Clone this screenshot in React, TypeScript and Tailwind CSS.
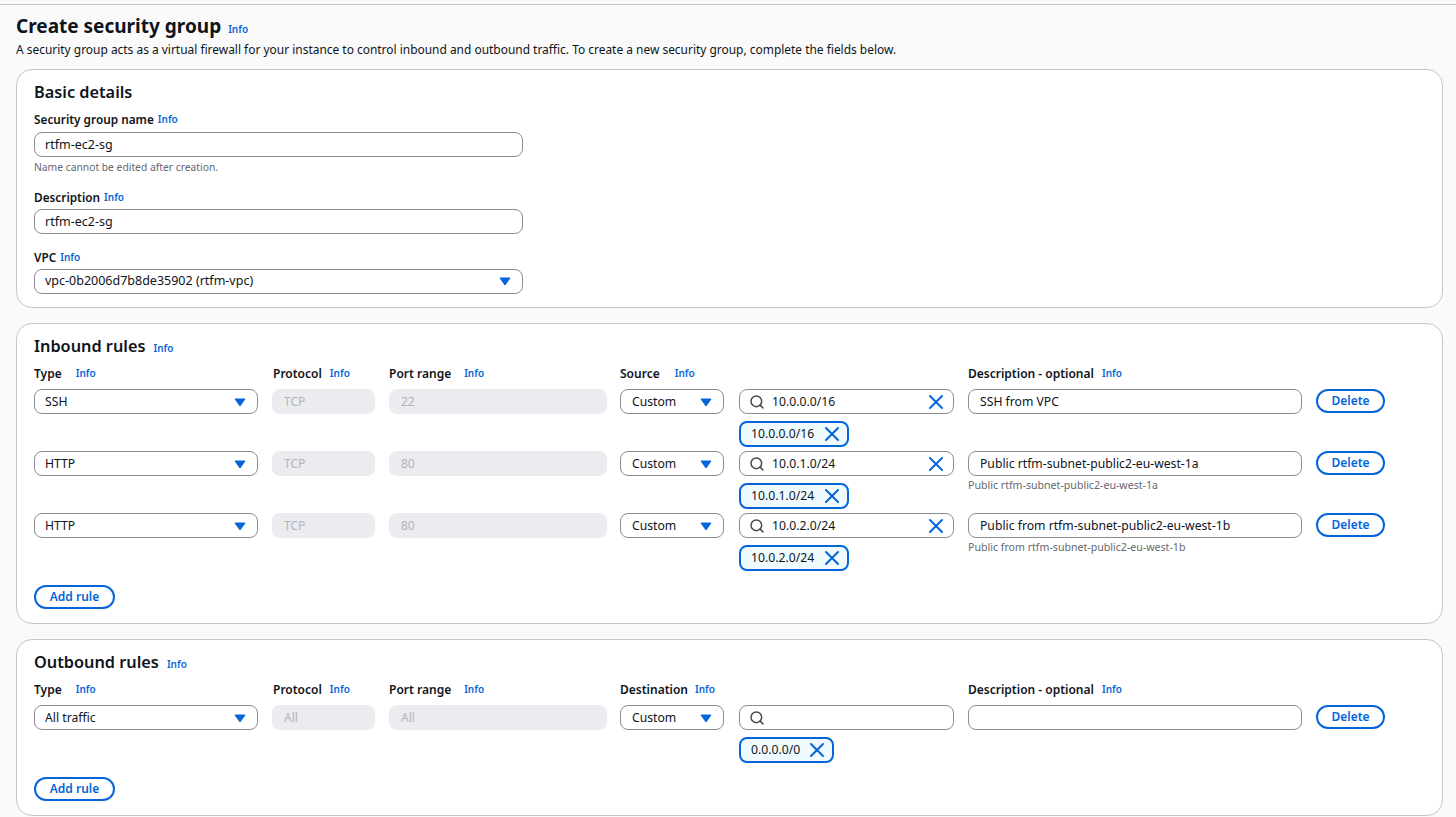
import { Search, X } from "lucide-react";

const blue = "text-[#0565d8]";

function Info({ className = "" }: { className?: string }) {
    return <span className={`text-[10px] font-semibold ${blue} ${className}`}>Info</span>;
}

function Caret() {
    return (
        <svg width="12" height="9" viewBox="0 0 12 9" className="shrink-0">
            <path d="M1 1h10L6 8z" fill="#0565d8" stroke="#0565d8" strokeLinejoin="round" />
        </svg>
    );
}

function Field({ value, className = "" }: { value: string; className?: string }) {
    return (
        <div className={`flex h-[25px] items-center rounded-lg border border-[#8c8c94] bg-white pt-[1px] text-[#0f141a] ${className}`}>
            {value}
        </div>
    );
}

function SelectBox({ value, className = "" }: { value: string; className?: string }) {
    return (
        <div className={`flex h-[25px] items-center justify-between rounded-lg border border-[#8c8c94] bg-white pr-[11px] text-[#0f141a] ${className}`}>
            <span>{value}</span>
            <Caret />
        </div>
    );
}

function Disabled({ value, className = "" }: { value: string; className?: string }) {
    return (
        <div className={`flex h-[25px] items-center rounded-lg bg-[#ebebf0] px-[12px] pt-[1px] text-[12px] text-[#b4b4bb] ${className}`}>
            {value}
        </div>
    );
}

function PillButton({ label, className = "" }: { label: string; className?: string }) {
    return (
        <div className={`flex h-[24px] items-center justify-center rounded-full border-2 border-[#0565d8] bg-white text-[12px] font-semibold ${blue} ${className}`}>
            {label}
        </div>
    );
}

function Chip({ value, className = "" }: { value: string; className?: string }) {
    return (
        <div className={`flex h-[26px] items-center justify-between rounded-lg border-2 border-[#0565d8] bg-[#f0fbff] pl-[10px] pr-[3px] text-[12.2px] text-[#0f141a] ${className}`}>
            <span>{value}</span>
            <X size={24} strokeWidth={2} className={blue} />
        </div>
    );
}

function HeaderRow({ source }: { source: string }) {
    const isDest = source === "Destination";
    return (
        <div className="mb-[6px] flex h-[19px] items-center text-[12px] font-semibold text-[#0f141a]">
            <div className="flex w-[239px] items-center"><span>Type</span><Info className="ml-[14px]" /></div>
            <div className="flex w-[116px] items-center"><span>Protocol</span><Info className="ml-[8px]" /></div>
            <div className="flex w-[231px] items-center"><span>Port range</span><Info className="ml-[13px]" /></div>
            <div className="flex w-[348px] items-center"><span>{source}</span><Info className={isDest ? "ml-[7px]" : "ml-[15px]"} /></div>
            <div className="flex items-center"><span>Description - optional</span><Info className="ml-[8px]" /></div>
        </div>
    );
}

interface Rule {
    type: string;
    protocol: string;
    port: string;
    query: string;
    chip: string;
    description: string;
    hint?: string;
}

function RuleRow({ rule }: { rule: Rule }) {
    return (
        <div className="flex h-[62px] items-start text-[12.2px]">
            <SelectBox value={rule.type} className="w-[224px] pl-[10px] pt-[1px]" />
            <Disabled value={rule.protocol} className="ml-[14px] w-[103px]" />
            <Disabled value={rule.port} className="ml-[14px] w-[218px]" />
            <SelectBox value="Custom" className="ml-[13px] w-[104px] pl-[11px] pt-[1px]" />
            <div className="ml-[15px] w-[215px]">
                <div className="flex h-[25px] items-center rounded-lg border border-[#8c8c94] bg-white pl-[9px] pr-[5px] text-[#0f141a]">
                    <Search size={16} strokeWidth={2.2} className="mr-[7px] shrink-0 text-[#414750]" />
                    <span className="flex-1 pt-[1px]">{rule.query}</span>
                    {rule.query && <X size={24} strokeWidth={2} className={blue} />}
                </div>
                <Chip value={rule.chip} className={`mt-[7px] ${rule.chip === "0.0.0.0/0" ? "w-[95px]" : "w-[110px]"}`} />
            </div>
            <div className="ml-[14px] w-[334px]">
                <Field value={rule.description} className="px-[11px]" />
                {rule.hint && <div className="mt-[2px] text-[10.6px] leading-[14px] text-[#656871]">{rule.hint}</div>}
            </div>
            <PillButton label="Delete" className="ml-[14px] w-[69px]" />
        </div>
    );
}

const inbound: Rule[] = [
    { type: "SSH", protocol: "TCP", port: "22", query: "10.0.0.0/16", chip: "10.0.0.0/16", description: "SSH from VPC" },
    { type: "HTTP", protocol: "TCP", port: "80", query: "10.0.1.0/24", chip: "10.0.1.0/24", description: "Public rtfm-subnet-public2-eu-west-1a", hint: "Public rtfm-subnet-public2-eu-west-1a" },
    { type: "HTTP", protocol: "TCP", port: "80", query: "10.0.2.0/24", chip: "10.0.2.0/24", description: "Public from rtfm-subnet-public2-eu-west-1b", hint: "Public from rtfm-subnet-public2-eu-west-1b" },
];

const outbound: Rule[] = [
    { type: "All traffic", protocol: "All", port: "All", query: "", chip: "0.0.0.0/0", description: "" },
];

function Card({ title, info = true, className = "", children }: { title: string; info?: boolean; className?: string; children: React.ReactNode }) {
    return (
        <section className={`rounded-2xl border border-[#c6c6cd] bg-white px-[17px] pt-[10px] ${className}`}>
            <div className="flex h-[25px] items-baseline">
                <h2 className="text-[16.3px] font-semibold leading-[25px] text-[#0f141a]">{title}</h2>
                {info && <Info className="ml-[8px]" />}
            </div>
            {children}
        </section>
    );
}

function FieldLabel({ label, className = "" }: { label: string; className?: string }) {
    return (
        <div className={`flex h-[17px] items-center text-[11.8px] font-semibold text-[#0f141a] ${className}`}>
            <span>{label}</span><Info className="ml-[4px]" />
        </div>
    );
}

export default function App() {
    return (
        <div className="h-[817px] overflow-hidden bg-[#fafafa] font-['Noto_Sans',sans-serif]">
            <div className="mt-[4px] h-[1px] bg-[#c6c6cd]" />
            <div className="pl-[16px] pr-[13px] pt-[9px]">
                <div className="flex h-[25px] items-baseline">
                    <h1 className="text-[19px] font-bold leading-[25px] text-[#0f141a]">Create security group</h1>
                    <Info className="ml-[7px]" />
                </div>
                <p className="mt-[2px] text-[11.95px] leading-[17px] text-[#0f141a]">
                    A security group acts as a virtual firewall for your instance to control inbound and outbound traffic. To create a new security group, complete the fields below.
                </p>

                <Card title="Basic details" info={false} className="mt-[11px] h-[239px]">
                    <FieldLabel label="Security group name" className="mt-[6px]" />
                    <Field value="rtfm-ec2-sg" className="mt-[4px] w-[489px] px-[10px] text-[12.5px]" />
                    <div className="mt-[3px] text-[10.3px] leading-[14px] text-[#656871]">Name cannot be edited after creation.</div>
                    <FieldLabel label="Description" className="mt-[15px]" />
                    <Field value="rtfm-ec2-sg" className="mt-[3px] w-[489px] px-[10px] text-[12.5px]" />
                    <FieldLabel label="VPC" className="mt-[15px]" />
                    <SelectBox value="vpc-0b2006d7b8de35902 (rtfm-vpc)" className="mt-[3px] w-[489px] pl-[10px] text-[12.5px]" />
                </Card>

                <Card title="Inbound rules" className="mt-[15px] h-[301px]">
                    <div className="mt-[5px]">
                        <HeaderRow source="Source" />
                        {inbound.map((r, i) => <RuleRow key={i} rule={r} />)}
                    </div>
                    <PillButton label="Add rule" className="mt-[10px] w-[81px]" />
                </Card>

                <Card title="Outbound rules" className="mt-[15px] h-[177px]">
                    <div className="mt-[5px]">
                        <HeaderRow source="Destination" />
                        {outbound.map((r, i) => <RuleRow key={i} rule={r} />)}
                    </div>
                    <PillButton label="Add rule" className="mt-[10px] w-[81px]" />
                </Card>
            </div>
        </div>
    );
}
